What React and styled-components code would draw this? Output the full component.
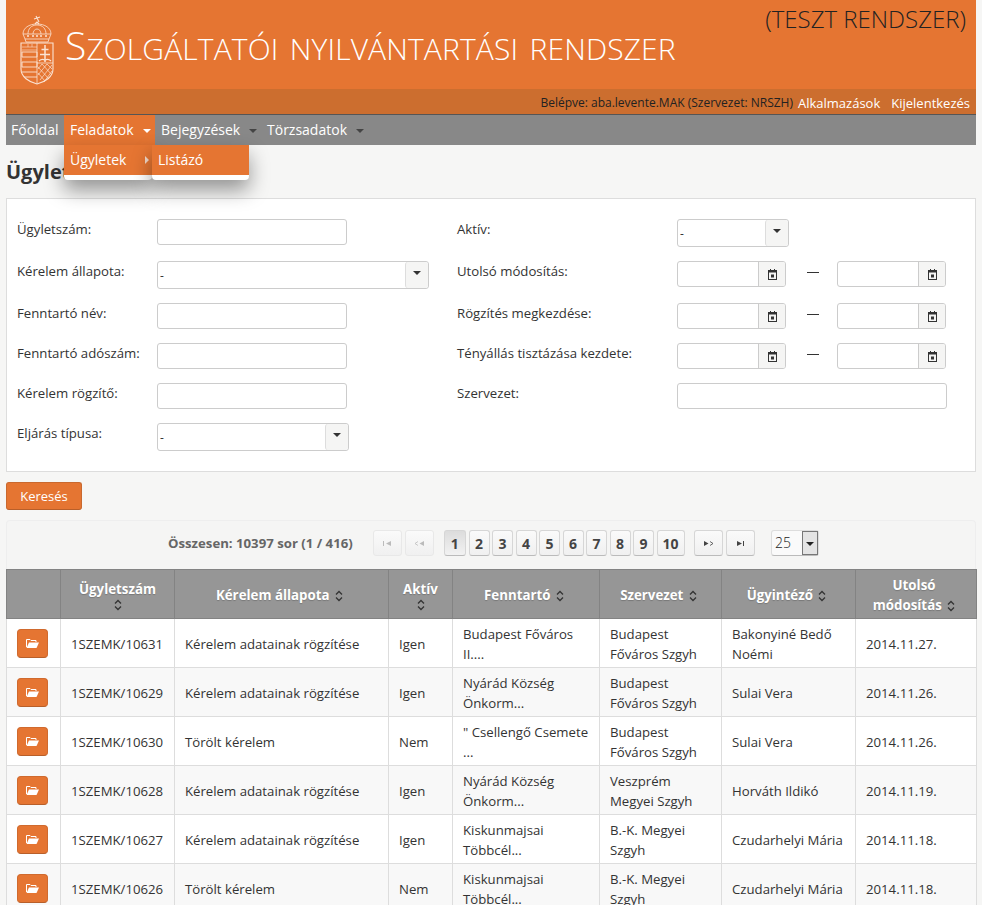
import React from 'react';
import styled, { createGlobalStyle } from 'styled-components';

const GlobalStyle = createGlobalStyle`
  html, body {
    margin: 0;
    padding: 0;
    height: 905px;
    overflow: hidden;
    background: #f6f6f5;
    font-family: "Open Sans", "Liberation Sans", sans-serif;
    font-size: 13px;
    color: #333;
  }
  * { box-sizing: border-box; }
`;

const ORANGE = '#e57532';

const Page = styled.div`
  padding: 0 6px;
  width: 982px;
`;

const Banner = styled.header`
  height: 89px;
  background: ${ORANGE};
  display: flex;
  justify-content: space-between;
  padding-left: 14px;
`;

const Brand = styled.div`
  display: flex;
  align-items: flex-start;
  padding-top: 15px;
`;

const Title = styled.h1`
  margin: 9px 0 0 11px;
  font-weight: 300;
  font-size: 43.5px;
  letter-spacing: 0.12px;
  line-height: 40px;
  font-variant: small-caps;
  color: #fff;
  white-space: nowrap;
  &::first-letter {
    font-size: 39px;
  }
`;

const TestLabel = styled.div`
  font-weight: 300;
  font-size: 24px;
  line-height: 30px;
  color: #222;
  padding: 4px 10px 0 0;
`;

const UserBar = styled.div`
  height: 26px;
  background: #cc6e2f;
  border-bottom: 1px solid #555;
  display: flex;
  justify-content: flex-end;
  align-items: center;
  padding: 2px 6px 0 0;
  font-size: 12px;
  color: #222;
`;

const UserLink = styled.a`
  color: #fff;
  font-size: 13px;
  margin-left: ${(props) => props.$gap}px;
`;

const Nav = styled.nav`
  position: relative;
  height: 30px;
  background: #888;
  display: flex;
`;

const NavItem = styled.div`
  position: relative;
  height: 30px;
  display: flex;
  align-items: center;
  padding: 0 6px 1px;
  font-size: 14px;
  color: #fff;
  width: ${(props) => props.$width}px;
  background: ${(props) => (props.$active ? ORANGE : 'transparent')};
`;

const HomeItem = styled(NavItem)`
  padding: 0 5px 1px;
  width: 58px;
`;

const Caret = styled.span`
  position: absolute;
  right: ${(props) => props.$right}px;
  top: 14px;
  width: 0;
  height: 0;
  border-left: 4px solid transparent;
  border-right: 4px solid transparent;
  border-top: 4px solid ${(props) => props.$color};
`;

const Menu = styled.div`
  position: absolute;
  z-index: 5;
  top: 30px;
  left: ${(props) => props.$left}px;
  width: ${(props) => props.$width}px;
  height: 35px;
  background: ${ORANGE};
  border-bottom: 5px solid #fff;
  border-radius: 0 0 4px 4px;
  box-shadow: 0 10px 20px rgba(0, 0, 0, 0.4);
  color: #fff;
  font-size: 14px;
  line-height: 30px;
  padding-left: 6px;
`;

const MenuArrow = styled.span`
  position: absolute;
  right: 3px;
  top: 11px;
  width: 0;
  height: 0;
  border-top: 4px solid transparent;
  border-bottom: 4px solid transparent;
  border-left: 4px solid #f3d9c8;
`;

const Heading = styled.h2`
  margin: 0;
  padding-top: 14px;
  height: 53px;
  font-size: 20px;
  line-height: 26px;
  font-weight: 700;
  color: #333;
`;

const FilterPanel = styled.section`
  height: 274px;
  background: #fff;
  border: 1px solid #ddd;
  display: flex;
  padding: 20px 0 0 10px;
`;

const FilterColumn = styled.div`
  width: ${(props) => props.$width}px;
`;

const FilterRow = styled.div`
  display: flex;
  height: ${(props) => props.$height || 40}px;
`;

const FilterLabel = styled.label`
  width: 140px;
  flex: none;
  font-size: 13.2px;
  line-height: 20px;
  color: #333;
  white-space: nowrap;
`;

const WideLabel = styled(FilterLabel)`
  width: 220px;
`;

const TextField = styled.div`
  width: ${(props) => props.$width}px;
  height: 26px;
  background: #fff;
  border: 1px solid #ccc;
  border-radius: 3px;
`;

const SelectBox = styled.div`
  position: relative;
  width: ${(props) => props.$width}px;
  height: 28px;
  background: #fff;
  border: 1px solid #ccc;
  border-radius: 3px;
  font-size: 12px;
  line-height: 27px;
  padding-left: 2px;
  color: #333;
`;

const SelectHandle = styled.span`
  position: absolute;
  top: 0;
  right: 0;
  bottom: 0;
  width: 23px;
  background: #f5f5f4;
  border-left: 1px solid #ddd;
  border-radius: 3px;
  &::after {
    content: '';
    position: absolute;
    left: 7px;
    top: 9px;
    border-left: 4px solid transparent;
    border-right: 4px solid transparent;
    border-top: 4px solid #333;
  }
`;

const DateField = styled.div`
  display: flex;
  width: 109px;
  height: 26px;
  background: #fff;
  border: 1px solid #ccc;
  border-radius: 3px;
  overflow: hidden;
`;

const DateButton = styled.span`
  margin-left: auto;
  width: 27px;
  background: #f5f5f4;
  border-left: 1px solid #ccc;
  display: flex;
  align-items: center;
  justify-content: center;
`;

const RangeDash = styled.span`
  width: 51px;
  height: 1px;
  flex: none;
  position: relative;
  &::after {
    content: '';
    position: absolute;
    left: 21px;
    top: 11px;
    width: 12px;
    height: 1px;
    background: #333;
  }
`;

const SearchButton = styled.button`
  display: block;
  margin: 10px 0 10px;
  width: 76px;
  height: 28px;
  background: ${ORANGE};
  border: 1px solid #c9692f;
  border-bottom-color: #b85f2a;
  border-radius: 3px;
  color: #fff;
  font-family: inherit;
  font-size: 13px;
  padding: 0;
`;

const Pager = styled.div`
  height: 49px;
  background: #f5f5f4;
  border: 1px solid #eee;
  border-bottom: none;
  border-radius: 4px 4px 0 0;
  display: flex;
  align-items: center;
  padding: 0 0 4px 161px;
`;

const PagerText = styled.span`
  width: 205px;
  font-size: 13.2px;
  font-weight: 700;
  color: #666;
  white-space: nowrap;
`;

const PageButton = styled.span`
  width: ${(props) => props.$width}px;
  height: 26px;
  margin-left: ${(props) => props.$gap || 0}px;
  margin-right: 2.5px;
  flex: none;
  display: flex;
  align-items: center;
  justify-content: center;
  border: 1px solid ${(props) => (props.$disabled ? '#e8e8e8' : '#d6d6d6')};
  border-bottom-color: ${(props) => (props.$disabled ? '#e8e8e8' : '#bbb')};
  border-radius: 3px;
  background: ${(props) =>
    props.$current
      ? 'linear-gradient(#dcdcdc, #f2f2f2)'
      : 'linear-gradient(#fafafa, #f0f0f0)'};
  font-size: 14px;
  font-weight: 700;
  color: ${(props) => (props.$disabled ? '#bbb' : '#444')};
`;

const PageSize = styled.div`
  position: relative;
  width: 48px;
  height: 26px;
  margin-left: 14px;
  background: #fafafa;
  border: 1px solid #ddd;
  border-bottom-color: #bbb;
  border-radius: 3px;
  font-size: 14px;
  font-weight: 300;
  line-height: 24px;
  padding-left: 3px;
  color: #222;
`;

const PageSizeHandle = styled.span`
  position: absolute;
  top: 0;
  right: 0;
  bottom: 0;
  width: 16px;
  background: #e4e4e4;
  border: 1px solid #777;
  &::after {
    content: '';
    position: absolute;
    left: 3px;
    top: 10px;
    border-left: 4px solid transparent;
    border-right: 4px solid transparent;
    border-top: 4px solid #222;
  }
`;

const Table = styled.table`
  width: 970px;
  border-collapse: collapse;
  table-layout: fixed;
  background: #fff;
`;

const HeadCell = styled.th`
  height: 49px;
  padding: 1px ${(props) => (props.$stacked ? 8 : 10)}px 0 ${(props) => (props.$stacked ? 8 : 6)}px;
  background: #969696;
  border: 1px solid #838383;
  color: #fff;
  font-size: 13.3px;
  line-height: 20px;
  font-weight: 700;
  text-align: center;
  vertical-align: middle;
  text-shadow: 0 1px 1px rgba(0, 0, 0, 0.2);
`;

const Row = styled.tr`
  background: ${(props) => (props.$odd ? '#f8f8f8' : '#fff')};
`;

const Cell = styled.td`
  height: 49px;
  padding: 1px 10px 0;
  border: 1px solid #ddd;
  font-size: 13.2px;
  line-height: 20px;
  color: #333;
  vertical-align: middle;
`;

const OpenButton = styled.button`
  display: flex;
  align-items: center;
  justify-content: center;
  width: 31px;
  height: 29px;
  margin-top: -1px;
  background: ${ORANGE};
  border: 1px solid #d06a2e;
  border-bottom-color: #b85f2a;
  border-radius: 4px;
  padding: 0;
`;

const SortGlyph = styled.svg`
  display: ${(props) => (props.$stacked ? 'block' : 'inline')};
  margin: ${(props) => (props.$stacked ? '0 auto' : '0 0 0 2px')};
  vertical-align: -2px;
`;

const SortIcon = ({ stacked }) => (
  <SortGlyph $stacked={stacked} width="8" height="12" viewBox="0 0 8 12">
    <path d="M1 4.500 4 1.500 7 4.500M1 7.500 4 10.500 7 7.500" fill="none" stroke="#333" strokeWidth="1.300" />
  </SortGlyph>
);

const FolderIcon = () => (
  <svg width="13" height="9" viewBox="0 0 13 9">
    <path d="M0.500 8V0.500H4L5 1.500H10V3" fill="none" stroke="#fff" />
    <path d="M3 3.500H13L10.500 9H0.500z" fill="#fff" />
  </svg>
);

const CalendarIcon = () => (
  <svg width="9" height="11" viewBox="0 0 9 11">
    <path d="M2 0h1v2H2zM6 0h1v2H6z" fill="#333" />
    <rect x="0.500" y="1.500" width="8" height="9" fill="none" stroke="#333" />
    <rect x="0.500" y="1.500" width="8" height="2" fill="#333" />
    <rect x="3" y="5.500" width="3" height="3" fill="#333" />
  </svg>
);

const SkipIcon = ({ d, chevron, color }) => (
  <svg width="10" height="5" viewBox="0 0 10 5">
    <path d={d} fill={color} />
    {chevron && <path d={chevron} fill="none" stroke={color} strokeWidth="0.800" />}
  </svg>
);

// simplified coat of arms, outline only
const Crest = () => (
  <svg width="34" height="70" viewBox="0 0 34 70" fill="none" stroke="#fbe3d3" strokeWidth="0.800">
    <path d="M16 1l3 6M14 4l6-2M15 9l2-2 2 2" strokeWidth="1.100" />
    <path d="M3 19c0-6 6-10 14-10s14 4 14 10" />
    <path d="M8 19c0-5 3-9 9-9s9 4 9 9M13 19c0-3 2-5 4-5s4 2 4 5" />
    <path d="M3 19l2 5h24l2-5zM5 24l1 3h22l1-3" />
    <path d="M7 21h2M12 21h2M16 21h2M20 21h2M25 21h2" strokeWidth="1.500" />
    <path d="M1 28h32v26c0 8-8 13-16 15C9 67 1 62 1 54z" strokeWidth="1.100" />
    <path d="M17 28v41M17 48h16" />
    <path d="M2 32h15M2 35h15M8 29v3M12 29v3" strokeWidth="0.600" />
    <path d="M2 37h15v5H2zM2 47h15v5H2zM2 57h15M4 62h13" strokeWidth="0.900" />
    <path d="M25 30v17M21.500 34.500h7M20 39.500h10" strokeWidth="1.500" />
    <path d="M19 46c2-2 4-2 6-1 2-1 4-1 6 1" strokeWidth="1.200" />
    <path d="M18 52l11 12M18 58l7 8M22 49l10 11M27 49l5 5M32 50L20 65M27 49L18 60M22 49l-4 5M32 56l-8 11" strokeWidth="0.700" />
  </svg>
);

const leftRows = [
  { label: 'Fenntartó név:' },
  { label: 'Fenntartó adószám:' },
  { label: 'Kérelem rögzítő:' },
];

const dateRows = [
  { label: 'Utolsó módosítás:', height: 42 },
  { label: 'Rögzítés megkezdése:', height: 40 },
  { label: 'Tényállás tisztázása kezdete:', height: 40 },
];

const columns = [
  { title: '', width: 54 },
  { title: 'Ügyletszám', width: 114, stacked: true },
  { title: 'Kérelem állapota', width: 214 },
  { title: 'Aktív', width: 64, stacked: true },
  { title: 'Fenntartó', width: 147 },
  { title: 'Szervezet', width: 122 },
  { title: 'Ügyintéző', width: 134 },
  { title: 'Utolsó módosítás', width: 121 },
];

const rows = [
  ['1SZEMK/10631', 'Kérelem adatainak rögzítése', 'Igen', ['Budapest Főváros', 'II....'], ['Budapest', 'Főváros Szgyh'], ['Bakonyiné Bedő', 'Noémi'], '2014.11.27.'],
  ['1SZEMK/10629', 'Kérelem adatainak rögzítése', 'Igen', ['Nyárád Község', 'Önkorm...'], ['Budapest', 'Főváros Szgyh'], ['Sulai Vera'], '2014.11.26.'],
  ['1SZEMK/10630', 'Törölt kérelem', 'Nem', ['" Csellengő Csemete', '...'], ['Budapest', 'Főváros Szgyh'], ['Sulai Vera'], '2014.11.26.'],
  ['1SZEMK/10628', 'Kérelem adatainak rögzítése', 'Igen', ['Nyárád Község', 'Önkorm...'], ['Veszprém', 'Megyei Szgyh'], ['Horváth Ildikó'], '2014.11.19.'],
  ['1SZEMK/10627', 'Kérelem adatainak rögzítése', 'Igen', ['Kiskunmajsai', 'Többcél...'], ['B.-K. Megyei', 'Szgyh'], ['Czudarhelyi Mária'], '2014.11.18.'],
  ['1SZEMK/10626', 'Törölt kérelem', 'Nem', ['Kiskunmajsai', 'Többcél...'], ['B.-K. Megyei', 'Szgyh'], ['Czudarhelyi Mária'], '2014.11.18.'],
];

const pages = [
  { n: 1, width: 22.5 }, { n: 2, width: 21 }, { n: 3, width: 21 }, { n: 4, width: 21 }, { n: 5, width: 21 },
  { n: 6, width: 21 }, { n: 7, width: 21 }, { n: 8, width: 21 }, { n: 9, width: 21 }, { n: 10, width: 28 },
];

const Lines = ({ items }) =>
  items.map((line, i) => (
    <React.Fragment key={i}>
      {i > 0 && <br />}
      {line}
    </React.Fragment>
  ));

const App = () => (
  <Page>
    <GlobalStyle />
    <Banner>
      <Brand>
        <Crest />
        <Title>Szolgáltatói nyilvántartási rendszer</Title>
      </Brand>
      <TestLabel>(TESZT RENDSZER)</TestLabel>
    </Banner>
    <UserBar>
      Belépve: aba.levente.MAK (Szervezet: NRSZH)
      <UserLink $gap={5}>Alkalmazások</UserLink>
      <UserLink $gap={11}>Kijelentkezés</UserLink>
    </UserBar>
    <Nav>
      <HomeItem>Főoldal</HomeItem>
      <NavItem $active $width={91}>
        Feladatok
        <Caret $right={4} $color="#fff" />
      </NavItem>
      <NavItem $width={106}>
        Bejegyzések
        <Caret $right={4} $color="#444" />
      </NavItem>
      <NavItem>
        Törzsadatok
        <Caret $right={-11} $color="#444" />
      </NavItem>
      <Menu $left={58} $width={88}>
        Ügyletek
        <MenuArrow />
      </Menu>
      <Menu $left={146} $width={97}>Listázó</Menu>
    </Nav>
    <Heading>Ügyletek</Heading>
    <FilterPanel>
      <FilterColumn $width={440}>
        <FilterRow $height={42}>
          <FilterLabel>Ügyletszám:</FilterLabel>
          <TextField $width={190} />
        </FilterRow>
        <FilterRow $height={42}>
          <FilterLabel>Kérelem állapota:</FilterLabel>
          <SelectBox $width={272}>-<SelectHandle /></SelectBox>
        </FilterRow>
        {leftRows.map((row) => (
          <FilterRow key={row.label}>
            <FilterLabel>{row.label}</FilterLabel>
            <TextField $width={190} />
          </FilterRow>
        ))}
        <FilterRow>
          <FilterLabel>Eljárás típusa:</FilterLabel>
          <SelectBox $width={192}>-<SelectHandle /></SelectBox>
        </FilterRow>
      </FilterColumn>
      <FilterColumn $width={510}>
        <FilterRow $height={42}>
          <WideLabel>Aktív:</WideLabel>
          <SelectBox $width={112}>-<SelectHandle /></SelectBox>
        </FilterRow>
        {dateRows.map((row) => (
          <FilterRow key={row.label} $height={row.height}>
            <WideLabel>{row.label}</WideLabel>
            <DateField><DateButton><CalendarIcon /></DateButton></DateField>
            <RangeDash />
            <DateField><DateButton><CalendarIcon /></DateButton></DateField>
          </FilterRow>
        ))}
        <FilterRow>
          <WideLabel>Szervezet:</WideLabel>
          <TextField $width={270} />
        </FilterRow>
      </FilterColumn>
    </FilterPanel>
    <SearchButton>Keresés</SearchButton>
    <Pager>
      <PagerText>Összesen: 10397 sor (1 / 416)</PagerText>
      <PageButton $width={29} $disabled><SkipIcon d="M0 0h1v5H0zM8 0v5L3 2.500z" color="#bbb" /></PageButton>
      <PageButton $width={29} $disabled><SkipIcon d="M10 0v5L5.500 2.500z" chevron="M4 0.500 1 2.500 4 4.500" color="#bbb" /></PageButton>
      {pages.map((page, i) => (
        <PageButton key={page.n} $width={page.width} $current={page.n === 1} $gap={i === 0 ? 7.5 : 0}>
          {page.n}
        </PageButton>
      ))}
      <PageButton $width={29} $gap={7}><SkipIcon d="M0 0v5l4.500-2.500z" chevron="M6 0.500 9 2.500 6 4.500" color="#444" /></PageButton>
      <PageButton $width={29}><SkipIcon d="M2 0v5l5-2.500zM8 0h1v5H8z" color="#444" /></PageButton>
      <PageSize>25<PageSizeHandle /></PageSize>
    </Pager>
    <Table>
      <colgroup>
        {columns.map((col, i) => <col key={i} style={{ width: col.width }} />)}
      </colgroup>
      <thead>
        <tr>
          {columns.map((col, i) => (
            <HeadCell key={i} $stacked={col.stacked}>
              {col.title}
              {col.title && !col.stacked && ' '}
              {col.title && <SortIcon stacked={col.stacked} />}
            </HeadCell>
          ))}
        </tr>
      </thead>
      <tbody>
        {rows.map((row, i) => (
          <Row key={row[0]} $odd={i % 2 === 1}>
            <Cell><OpenButton><FolderIcon /></OpenButton></Cell>
            <Cell>{row[0]}</Cell>
            <Cell>{row[1]}</Cell>
            <Cell>{row[2]}</Cell>
            <Cell><Lines items={row[3]} /></Cell>
            <Cell><Lines items={row[4]} /></Cell>
            <Cell><Lines items={row[5]} /></Cell>
            <Cell>{row[6]}</Cell>
          </Row>
        ))}
      </tbody>
    </Table>
  </Page>
);

export default App;
